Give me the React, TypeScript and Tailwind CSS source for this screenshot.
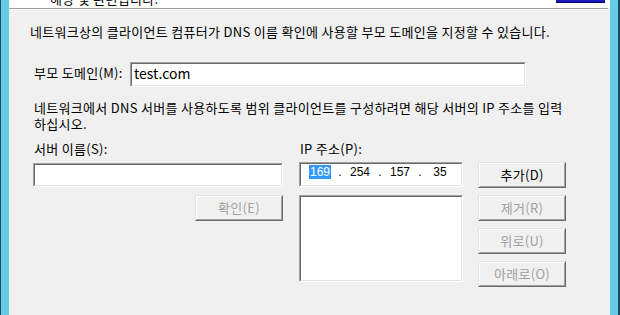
import React from "react";

function Btn({ label, enabled, w = "w-[88px]", h = "h-[26px]" }: { label: string; enabled?: boolean; w?: string; h?: string }) {
  return (
    <div className={`${w} ${h} border border-t-[#e3e3e3] border-l-[#e3e3e3] border-b-[#696969] border-r-[#696969] bg-[#f0f0f0]`}>
      <div className="w-full h-full border border-t-white border-l-white border-b-[#a0a0a0] border-r-[#a0a0a0] flex items-center justify-center">
        <span className={`text-[13px] leading-[16px] ${enabled ? "text-black" : "text-[#a0a0a0]"}`}>{label}</span>
      </div>
    </div>
  );
}

function Sunken({ className, children }: { className: string; children?: React.ReactNode }) {
  return (
    <div className={`${className} border border-t-[#a0a0a0] border-l-[#a0a0a0] border-b-white border-r-white`}>
      <div className="w-full h-full border border-t-[#696969] border-l-[#696969] border-b-[#e3e3e3] border-r-[#e3e3e3] bg-white">
        {children}
      </div>
    </div>
  );
}

export default function App() {
  return (
    <div className="w-[620px] h-[315px] flex bg-[#f0f0f0] overflow-hidden font-[family-name:'Noto_Sans_CJK_KR','Noto_Sans',sans-serif] text-black text-[13px] tracking-[0.3px]">
      <div className="w-[9px] h-full flex">
        <div className="w-[1px] h-full bg-[#1e4a66]" />
        <div className="w-[8px] h-full bg-[#65cbe9]" />
      </div>
      <div className="flex-1 flex flex-col">
        <div className="h-[8px] bg-white relative overflow-hidden">
          <div className="absolute left-[41px] top-[-9px] leading-[16px] text-[13px]">해당 및 관련됩니다.</div>
          <div className="absolute left-[547px] top-0 w-[49px] h-[3px] bg-[#1a1ab8] border-b border-[#00006a]" />
        </div>
        <div className="h-[1px] bg-[#a0a0a0] mr-[2px]" />
        <div className="h-[1px] bg-white mr-[2px]" />
        <div className="pl-[21px] mt-[14px] leading-[16px]">
          네트워크상의 클라이언트 컴퓨터가 DNS 이름 확인에 사용할 부모 도메인을 지정할 수 있습니다.
        </div>
        <div className="flex items-start mt-[22px] pl-[25px]">
          <div className="w-[96px] leading-[16px] mt-[3px]">부모 도메인(M):</div>
          <Sunken className="w-[396px] h-[25px]">
            <div className="pl-[2px] leading-[18px] text-[14px] tracking-normal">test.com</div>
          </Sunken>
        </div>
        <div className="pl-[25px] mt-[13px] leading-[16px]">
          네트워크에서 DNS 서버를 사용하도록 범위 클라이언트를 구성하려면 해당 서버의 IP 주소를 입력
          <br />
          하십시오.
        </div>
        <div className="flex items-start mt-[9px]">
          <div className="ml-[24px] w-[250px] flex flex-col">
            <div className="pl-[1px] leading-[16px]">서버 이름(S):</div>
            <Sunken className="mt-[6px] w-[250px] h-[24px]" />
            <div className="mt-[8px] self-end">
              <Btn label="확인(E)" />
            </div>
          </div>
          <div className="ml-[16px] w-[164px] flex flex-col">
            <div className="pl-[1px] leading-[16px]">IP 주소(P):</div>
            <Sunken className="mt-[5px] w-[164px] h-[25px]">
              <div className="flex items-start pt-[1px] pl-[2px] font-[family-name:'Liberation_Sans',sans-serif] text-[12px] leading-[14px] tracking-normal">
                <div className="w-[34px] flex justify-center"><span className="bg-[#3399ff] text-white px-[1px]">169</span></div>
                <div className="w-[6px] text-center">.</div>
                <div className="w-[34px] text-center">254</div>
                <div className="w-[6px] text-center">.</div>
                <div className="w-[34px] text-center">157</div>
                <div className="w-[6px] text-center">.</div>
                <div className="w-[34px] text-center">35</div>
              </div>
            </Sunken>
            <Sunken className="mt-[8px] w-[164px] h-[87px]" />
          </div>
          <div className="ml-[15px] mt-[21px] flex flex-col gap-[7px]">
            <Btn label="추가(D)" enabled />
            <Btn label="제거(R)" />
            <Btn label="위로(U)" />
            <Btn label="아래로(O)" />
          </div>
        </div>
      </div>
      <div className="w-[10px] h-full flex">
        <div className="w-[8px] h-full bg-[#65cbe9]" />
        <div className="w-[2px] h-full bg-[#1e4a66]" />
      </div>
    </div>
  );
}
